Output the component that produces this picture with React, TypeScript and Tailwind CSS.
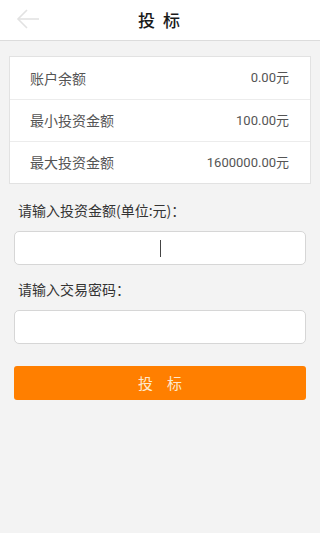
import { useState } from "react";

const rows = [
  { label: "账户余额", value: "0.00元" },
  { label: "最小投资金额", value: "100.00元" },
  { label: "最大投资金额", value: "1600000.00元" },
];

function BackArrow() {
  return (
    <svg width="24" height="22" viewBox="0 0 24 22" fill="none" stroke="#e2e2e2" strokeWidth="1.6">
      <path d="M23 11H2" />
      <path d="M11 2L2 11L11 20" />
    </svg>
  );
}

export default function App() {
  const [amount, setAmount] = useState("");
  const [password, setPassword] = useState("");

  return (
    <div
      className="min-h-[533px] w-[320px] bg-[#f3f3f3]"
      style={{ fontFamily: '"Noto Sans CJK SC", "Liberation Sans", sans-serif' }}
    >
      {/* Header */}
      <div className="relative flex h-[41px] items-center justify-center border-b border-[#dcdcdc] bg-white">
        <button className="absolute left-[16px] top-[8px]" aria-label="返回">
          <BackArrow />
        </button>
        <h1 className="pl-[6px] text-[17px] font-medium tracking-[8px] text-[#1a1a1a]">投标</h1>
      </div>

      {/* Account info */}
      <div className="mx-[9px] mt-[15px] border border-[#e2e2e2] bg-white">
        {rows.map((row, i) => (
          <div
            key={row.label}
            className={`flex h-[42px] items-center justify-between pl-[20px] pr-[21px] text-[#555] ${
              i > 0 ? "border-t border-[#ececec]" : ""
            }`}
          >
            <span className="text-[14px]">{row.label}</span>
            <span className="text-[13px]" style={{ fontFamily: '"Roboto", "Noto Sans CJK SC", sans-serif' }}>
              {row.value}
            </span>
          </div>
        ))}
      </div>

      {/* Form */}
      <div className="px-[14px]">
        <p className="mt-[16px] pl-[4px] text-[14px] text-[#333]">请输入投资金额(单位:元)：</p>
        <div className="relative mt-[10px]">
          <input
            value={amount}
            onChange={(e) => setAmount(e.target.value)}
            className="block h-[34px] w-full rounded-[5px] border border-[#d6d6d6] bg-white text-center text-[14px] caret-transparent outline-none"
          />
          {amount === "" && (
            <span className="pointer-events-none absolute left-1/2 top-[9px] h-[17px] w-px bg-[#444]" />
          )}
        </div>

        <p className="mt-[14px] pl-[4px] text-[14px] text-[#333]">请输入交易密码：</p>
        <input
          type="password"
          value={password}
          onChange={(e) => setPassword(e.target.value)}
          className="mt-[10px] block h-[34px] w-full rounded-[5px] border border-[#d6d6d6] bg-white px-2 text-[14px] outline-none"
        />

        <button className="mt-[22px] flex h-[34px] w-full items-center justify-center rounded-[3px] bg-[#ff7f00] text-[15px] tracking-[14px] text-[#fde9cf]">
          <span className="pl-[14px]">投标</span>
        </button>
      </div>
    </div>
  );
}
